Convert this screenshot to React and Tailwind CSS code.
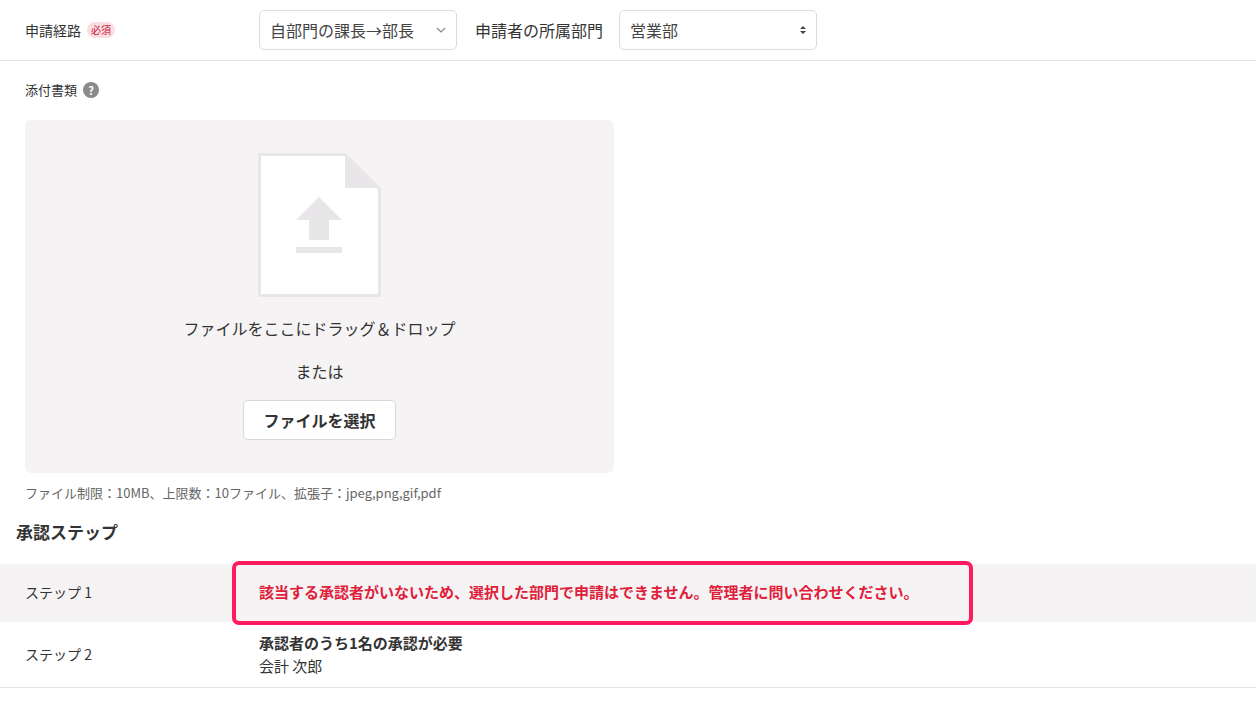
export default function App() {
  const f = { fontFamily: '"Noto Sans CJK JP", "Noto Sans", sans-serif' };
  return (
    <div style={f} className="w-[1256px] h-[705px] bg-white text-[#333] overflow-hidden">
      <div className="h-[61px] border-b border-[#e5e5e5] flex items-center">
        <div className="w-[259px] pl-[25px] flex items-center gap-[6px] text-[14px]">
          申請経路
          <span className="text-[10px] leading-[16px] px-[4px] rounded-full bg-[#fbdde2] text-[#c8193c]">必須</span>
        </div>
        <div className="w-[198px] h-[40px] border border-[#dcdcdc] rounded-[5px] flex items-center justify-between px-[10px] text-[16px] text-[#444]">
          自部門の課長→部長
          <svg width="10" height="6" viewBox="0 0 10 6"><path d="M1 1l4 4 4-4" fill="none" stroke="#888" strokeWidth="1.2"/></svg>
        </div>
        <div className="w-[162px] pl-[18px] text-[16px]">申請者の所属部門</div>
        <div className="w-[198px] h-[40px] border border-[#dcdcdc] rounded-[5px] flex items-center justify-between px-[10px] text-[16px] text-[#444]">
          営業部
          <svg width="6" height="10" viewBox="0 0 6 10"><path d="M0 4l3-3 3 3zM0 6l3 3 3-3z" fill="#444"/></svg>
        </div>
      </div>
      <div className="pl-[25px] pt-[19px] flex items-center gap-[6px] text-[13px]">
        添付書類
        <span className="w-[16px] h-[16px] rounded-full bg-[#8a8a8a] text-white text-[11px] font-bold flex items-center justify-center">?</span>
      </div>
      <div className="ml-[25px] mt-[20px] w-[589px] h-[353px] bg-[#f5f3f4] rounded-[6px] flex flex-col items-center pt-[33px]">
        <svg width="123" height="144" viewBox="0 0 123 144">
          <path d="M1.5 1.5H87L121.5 36V142.5H1.5Z" fill="#fff" stroke="#e8e6e8" strokeWidth="3"/>
          <path d="M87 1.5V35H121.5Z" fill="#e8e6e8"/>
          <path d="M61 44L84 67H71V87H51V67H38Z" fill="#e8e6e8"/>
          <rect x="38" y="94" width="46" height="6" fill="#e8e6e8"/>
        </svg>
        <div className="mt-[19px] text-[16px]">ファイルをここにドラッグ＆ドロップ</div>
        <div className="mt-[19px] text-[16px]">または</div>
        <div className="mt-[17px] h-[40px] px-[19px] bg-white border border-[#d8d8d8] rounded-[5px] flex items-center text-[16px] font-bold">ファイルを選択</div>
      </div>
      <div className="pl-[25px] mt-[10px] text-[13px] text-[#666]">ファイル制限：10MB、上限数：10ファイル、拡張子：jpeg,png,gif,pdf</div>
      <div className="pl-[16px] mt-[17px] text-[17px] font-bold">承認ステップ</div>
      <div className="mt-[19px] h-[58px] bg-[#f5f3f4] flex items-center">
        <div className="w-[232px] pl-[25px] text-[14px]">ステップ 1</div>
        <div className="w-[741px] h-[64px] border-[4px] border-[#ff1a5e] rounded-[7px] flex items-center pl-[23px] text-[15px] font-bold text-[#e0203a]">
          該当する承認者がいないため、選択した部門で申請はできません。管理者に問い合わせください。
        </div>
      </div>
      <div className="h-[66px] border-b border-[#e5e5e5] flex items-center">
        <div className="w-[259px] pl-[25px] text-[14px]">ステップ 2</div>
        <div className="text-[15px] leading-[23px]">
          <div className="font-bold">承認者のうち1名の承認が必要</div>
          <div>会計 次郎</div>
        </div>
      </div>
    </div>
  );
}
